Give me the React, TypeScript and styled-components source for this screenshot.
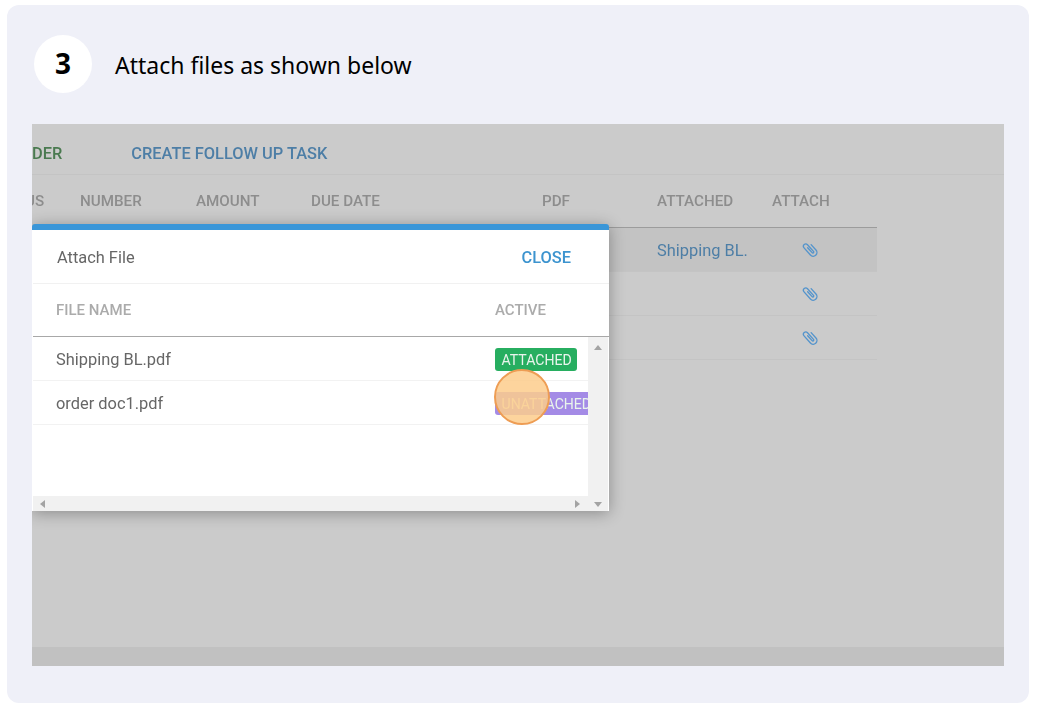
import React from "react";
import styled, { createGlobalStyle } from "styled-components";

const Global = createGlobalStyle`
  html, body { margin: 0; padding: 0; background: #ffffff; }
  body { width: 1037px; height: 707px; overflow: hidden; }
  * { box-sizing: border-box; }
`;

const Page = styled.div`
  padding: 5px 8px 4px 7px;
  height: 707px;
`;

const Card = styled.section`
  height: 698px;
  background: #eff0f8;
  border-radius: 12px;
  padding: 30px 25px 37px 25px;
  display: flex;
  flex-direction: column;
  gap: 31px;
`;

const StepHeader = styled.header`
  display: flex;
  align-items: center;
  gap: 23px;
  padding-left: 2px;
  font-family: "Noto Sans", sans-serif;
`;

const StepNumber = styled.div`
  width: 58px;
  height: 58px;
  border-radius: 50%;
  background: #ffffff;
  display: flex;
  align-items: center;
  justify-content: center;
  font-size: 28px;
  font-weight: 700;
  color: #000;
  padding-bottom: 2px;
`;

const StepTitle = styled.h2`
  margin: 0;
  padding-top: 1px;
  font-size: 23px;
  font-weight: 400;
  color: #000;
`;

const Shot = styled.div`
  position: relative;
  flex: 1;
  overflow: hidden;
  background: #cbcbcb;
  display: flex;
  flex-direction: column;
  font-family: Roboto, sans-serif;
  filter: blur(0.35px);
`;

const Toolbar = styled.div`
  height: 51px;
  border-bottom: 1px solid #c4c4c4;
  display: flex;
  align-items: center;
  gap: 69px;
  font-size: 16.4px;
  font-weight: 500;
  padding-top: 8px;
`;

const ToolLink = styled.span<{ $green?: boolean }>`
  color: ${(p) => (p.$green ? "#4a7a50" : "#4d7ea6")};
`;

const Table = styled.div`
  width: 852px;
  flex: 1;
  margin-left: -7px;
`;

const Row = styled.div<{ $head?: boolean; $on?: boolean }>`
  display: grid;
  grid-template-columns: 55px 116px 115px 231px 115px 115px 105px;
  align-items: center;
  height: ${(p) => (p.$head ? "53px" : "44px")};
  background: ${(p) => (p.$on ? "#c3c3c3" : "transparent")};
  border-bottom: 1px solid ${(p) => (p.$head ? "#9c9c9c" : "#c4c4c4")};
`;

const HeadCell = styled.span`
  font-size: 15.2px;
  font-weight: 500;
  color: #8d8d8d;
`;

const FileLink = styled.span`
  font-size: 16.4px;
  color: #4d7ea6;
  padding-top: 1px;
`;

const ClipCell = styled.span`
  display: flex;
  padding-left: 30px;
  color: #5494cc;
`;

const Clip = styled.svg`
  width: 17px;
  height: 17px;
  fill: none;
  stroke: currentColor;
  stroke-width: 1.25;
  stroke-linecap: round;
`;

const Footer = styled.div`
  height: 19px;
  background: #c1c1c1;
`;

const Modal = styled.div`
  position: absolute;
  left: 0;
  top: 100px;
  width: 577px;
  height: 287px;
  padding-left: 1px;
  background: #fff;
  border-top: 6px solid #3a96d8;
  border-radius: 3px 3px 0 0;
  box-shadow: 0 2px 16px rgba(0, 0, 0, 0.32);
  display: flex;
  flex-direction: column;
`;

const ModalHead = styled.div`
  height: 54px;
  flex: none;
  border-bottom: 1px solid #f1f1f1;
  display: flex;
  align-items: center;
  justify-content: space-between;
  padding: 1px 38px 0 24px;
`;

const ModalTitle = styled.span`
  font-size: 16.4px;
  color: #666;
`;

const CloseLink = styled.span`
  font-size: 16.4px;
  font-weight: 500;
  color: #3d94cf;
`;

const ColsHead = styled.div`
  height: 53px;
  flex: none;
  border-bottom: 1px solid #a8a8a8;
  display: grid;
  grid-template-columns: 462px 1fr;
  align-items: center;
`;

const ColLabel = styled.span<{ $first?: boolean }>`
  font-size: 15px;
  font-weight: 500;
  color: #ababab;
  padding-left: ${(p) => (p.$first ? "23px" : "0")};
`;

const ScrollArea = styled.div`
  flex: 1;
  display: grid;
  grid-template-columns: 555px 20px;
  grid-template-rows: 159px 15px;
  min-height: 0;
`;

const Rows = styled.div`
  overflow: hidden;
`;

const FileRow = styled.div`
  height: 44px;
  border-bottom: 1px solid #f2f2f2;
  display: grid;
  grid-template-columns: 462px 93px;
  align-items: center;
  overflow: hidden;
  padding-top: 2px;
`;

const FileName = styled.span`
  font-size: 16.4px;
  color: #666;
  padding-left: 23px;
`;

const Badge = styled.span<{ $on?: boolean }>`
  height: 23px;
  display: inline-flex;
  align-items: center;
  width: ${(p) => (p.$on ? "82px" : "100px")};
  padding: 1px 0 0 6.5px;
  white-space: nowrap;
  border-radius: 3px;
  font-size: 14.1px;
  color: #e9f4ec;
  background: ${(p) => (p.$on ? "#27ae60" : "#a48be6")};
`;

const VBar = styled.div`
  background: #f1f1f1;
  display: flex;
  justify-content: center;
  padding-top: 8px;
`;

const HBar = styled.div`
  background: #f1f1f1;
  display: flex;
  align-items: center;
  justify-content: space-between;
  padding: 0 8px 0 7px;
`;

const Corner = styled.div`
  background: #f1f1f1;
  display: flex;
  justify-content: center;
  padding-top: 6px;
`;

const Arrow = styled.i<{ $dir: "up" | "down" | "left" | "right" }>`
  display: block;
  width: 0;
  height: 0;
  ${(p) =>
    p.$dir === "up"
      ? "border-left:4px solid transparent;border-right:4px solid transparent;border-bottom:5px solid #a3a3a3;"
      : p.$dir === "down"
      ? "border-left:4px solid transparent;border-right:4px solid transparent;border-top:5px solid #a3a3a3;"
      : p.$dir === "left"
      ? "border-top:4px solid transparent;border-bottom:4px solid transparent;border-right:5px solid #a3a3a3;"
      : "border-top:4px solid transparent;border-bottom:4px solid transparent;border-left:5px solid #a3a3a3;"}
`;

const Marker = styled.div`
  position: absolute;
  left: 462px;
  top: 245px;
  width: 56px;
  height: 56px;
  border-radius: 50%;
  background: rgba(253, 205, 140, 0.85);
  border: 2px solid #ee9d54;
`;

const rows = [
  { on: true, file: "Shipping BL." },
  { on: false, file: "" },
  { on: false, file: "" },
];

export default function App() {
  return (
    <>
      <Global />
      <Page>
        <Card>
          <StepHeader>
            <StepNumber>3</StepNumber>
            <StepTitle>Attach files as shown below</StepTitle>
          </StepHeader>
          <Shot>
            <Toolbar>
              <ToolLink $green>DER</ToolLink>
              <ToolLink>CREATE FOLLOW UP TASK</ToolLink>
            </Toolbar>
            <Table>
              <Row $head>
                <HeadCell>US</HeadCell>
                <HeadCell>NUMBER</HeadCell>
                <HeadCell>AMOUNT</HeadCell>
                <HeadCell>DUE DATE</HeadCell>
                <HeadCell>PDF</HeadCell>
                <HeadCell>ATTACHED</HeadCell>
                <HeadCell>ATTACH</HeadCell>
              </Row>
              {rows.map((r, i) => (
                <Row key={i} $on={r.on}>
                  <span />
                  <span />
                  <span />
                  <span />
                  <span />
                  <FileLink>{r.file}</FileLink>
                  <ClipCell>
                    <Clip viewBox="0 0 16 16">
                      <path
                        transform="rotate(-42 8 8)"
                        d="M11.5 5v6.8a3.5 3.5 0 0 1-7 0V2.8a2.2 2.2 0 0 1 4.4 0v8.4a.9.9 0 0 1-1.8 0V5"
                      />
                    </Clip>
                  </ClipCell>
                </Row>
              ))}
            </Table>
            <Footer />
            <Modal>
              <ModalHead>
                <ModalTitle>Attach File</ModalTitle>
                <CloseLink>CLOSE</CloseLink>
              </ModalHead>
              <ColsHead>
                <ColLabel $first>FILE NAME</ColLabel>
                <ColLabel>ACTIVE</ColLabel>
              </ColsHead>
              <ScrollArea>
                <Rows>
                  <FileRow>
                    <FileName>Shipping BL.pdf</FileName>
                    <Badge $on>ATTACHED</Badge>
                  </FileRow>
                  <FileRow>
                    <FileName>order doc1.pdf</FileName>
                    <Badge>UNATTACHED</Badge>
                  </FileRow>
                </Rows>
                <VBar>
                  <Arrow $dir="up" />
                </VBar>
                <HBar>
                  <Arrow $dir="left" />
                  <Arrow $dir="right" />
                </HBar>
                <Corner>
                  <Arrow $dir="down" />
                </Corner>
              </ScrollArea>
            </Modal>
            <Marker />
          </Shot>
        </Card>
      </Page>
    </>
  );
}
